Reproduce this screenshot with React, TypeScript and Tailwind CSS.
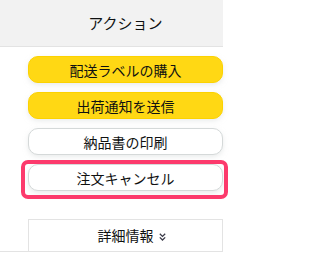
import React from 'react'

const font = { fontFamily: '"Noto Sans CJK JP", "Noto Sans", sans-serif' }

const ActionButton: React.FC<{ label: string; primary?: boolean }> = ({ label, primary }) => (
  <button
    className={
      primary
        ? 'h-[27px] w-full rounded-[10px] border border-[#fcd200] bg-[#ffd814] text-[14px] leading-none text-[#0f1111] shadow-[0_2px_5px_rgba(213,217,217,0.5)]'
        : 'h-[27px] w-full rounded-[10px] border border-[#d5d9d9] bg-white text-[14px] leading-none text-[#0f1111] shadow-[0_2px_5px_rgba(213,217,217,0.5)]'
    }
  >
    {label}
  </button>
)

export default function App() {
  return (
    <div className="h-[258px] w-[244px] overflow-hidden bg-white" style={font}>
      <div className="w-[223px] border-b border-[#e3e3e3]">
        <div className="flex h-[47px] items-center justify-center border-b border-[#e3e3e3] bg-[#f2f2f2] pl-[28px] text-[15px] text-[#0f1111]">
          アクション
        </div>
        <div className="flex flex-col gap-[9px] pl-[28px] pt-[9px]">
          <ActionButton label="配送ラベルの購入" primary />
          <ActionButton label="出荷通知を送信" primary />
          <ActionButton label="納品書の印刷" />
          <div className="relative">
            <ActionButton label="注文キャンセル" />
            <div className="pointer-events-none absolute -top-[4px] -right-[5px] -bottom-[8px] -left-[7px] rounded-[7px] border-4 border-[#fc3a6c]" />
          </div>
        </div>
        <div className="mt-[28px] ml-[28px] flex h-[32px] items-center justify-center border-x border-t border-[#e3e3e3] text-[14px] text-[#0f1111]">
          <span>詳細情報</span>
          <svg viewBox="0 0 7 8" className="ml-[5px] mr-[-12px] mt-[3px] h-[8px] w-[7px]" fill="none" stroke="#3a3a48" strokeWidth="1.3">
            <path d="M0.8 0.8 L3.5 3.4 L6.2 0.8" />
            <path d="M0.8 4.4 L3.5 7 L6.2 4.4" />
          </svg>
        </div>
      </div>
    </div>
  )
}
